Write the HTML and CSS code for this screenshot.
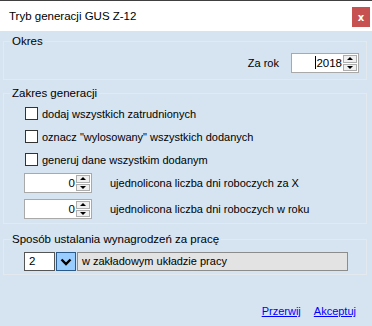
FILE: index.html
```html
<!DOCTYPE html>
<html lang="pl">
<head>
<meta charset="utf-8">
<title>Tryb generacji GUS Z-12</title>
<link rel="stylesheet" href="styles.css">
</head>
<body>
<div class="window">
  <div class="titlebar">
    <span class="title">Tryb generacji GUS Z-12</span>
    <span class="close">x</span>
  </div>
  <div class="content">
    <fieldset class="group okres">
      <legend>Okres</legend>
      <div class="inner year-row">
        <span class="label">Za rok</span>
        <div class="spin year">
          <span class="val"><span class="caret"></span>2018</span>
          <div class="arrows"><span class="btn up"></span><span class="btn down"></span></div>
        </div>
      </div>
    </fieldset>

    <fieldset class="group zakres">
      <legend>Zakres generacji</legend>
      <div class="inner">
        <div class="check-row"><span class="box"></span><span>dodaj wszystkich zatrudnionych</span></div>
        <div class="check-row"><span class="box"></span><span>oznacz "wylosowany" wszystkich dodanych</span></div>
        <div class="check-row"><span class="box"></span><span>generuj dane wszystkim dodanym</span></div>
        <div class="spin-row first">
          <div class="spin num">
            <span class="val">0</span>
            <div class="arrows"><span class="btn up"></span><span class="btn down"></span></div>
          </div>
          <span>ujednolicona liczba dni roboczych za X</span>
        </div>
        <div class="spin-row">
          <div class="spin num">
            <span class="val">0</span>
            <div class="arrows"><span class="btn up"></span><span class="btn down"></span></div>
          </div>
          <span>ujednolicona liczba dni roboczych w roku</span>
        </div>
      </div>
    </fieldset>

    <fieldset class="group sposob">
      <legend>Sposób ustalania wynagrodzeń za pracę</legend>
      <div class="inner combo">
        <span class="code">2</span>
        <span class="drop"><svg width="12" height="8" viewBox="0 0 12 8"><path d="M1.5 1.5 L6 6 L10.5 1.5" fill="none" stroke="#000" stroke-width="2.4"/></svg></span>
        <span class="desc">w zakładowym układzie pracy</span>
      </div>
    </fieldset>

    <div class="footer">
      <a class="link" href="#">Przerwij</a>
      <a class="link" href="#">Akceptuj</a>
    </div>
  </div>
</div>
</body>
</html>
```
FILE: styles.css
```css
* { box-sizing: border-box; }
html, body { margin: 0; padding: 0; }
body {
  width: 372px;
  height: 326px;
  overflow: hidden;
  font-family: "Liberation Sans", Arial, sans-serif;
  font-size: 11px;
  color: #000;
  background: #d6e4f1;
}
.window {
  height: 326px;
  border-top: 1px solid #404040;
  display: flex;
  flex-direction: column;
}
.titlebar {
  height: 30px;
  background: #fff;
  display: flex;
  align-items: center;
  justify-content: space-between;
  padding: 0 2px 0 9px;
}
.title { font-size: 11.5px; }
.close {
  width: 18px;
  height: 20px;
  margin-top: 2px;
  background: #c75050;
  color: #fff;
  font-family: "DejaVu Sans", sans-serif;
  font-weight: bold;
  font-size: 10px;
  display: flex;
  align-items: center;
  justify-content: center;
}
.content {
  flex: 1;
  display: flex;
  flex-direction: column;
  padding: 3px 5px 0 3px;
}
.group {
  margin: 0;
  padding: 0;
  border: 1px solid #e4e9ee;
  min-width: 0;
}
.group legend {
  padding: 0 2px;
  margin-left: 6px;
  line-height: 14px;
  font-size: 11.5px;
}
.okres .inner { padding: 5px 7px 6px 0; }
.year-row {
  display: flex;
  justify-content: flex-end;
  align-items: center;
  gap: 12px;
}
.spin {
  height: 20px;
  background: #fff;
  border: 1px solid #a9a9a9;
  display: flex;
  align-items: center;
}
.spin .val {
  flex: 1;
  text-align: right;
  padding-right: 1px;
  line-height: 18px;
  font-size: 11.5px;
}
.caret {
  display: inline-block;
  width: 1px;
  height: 13px;
  background: #000;
  vertical-align: -2px;
}
.year { width: 68px; }
.num { width: 68px; }
.arrows {
  width: 15px;
  height: 18px;
  display: flex;
  flex-direction: column;
  justify-content: center;
  gap: 1px;
  padding: 1px 1px 1px 0;
}
.btn {
  flex: 1;
  background: #f0f0f0;
  border: 1px solid #adadad;
  display: flex;
  align-items: center;
  justify-content: center;
}
.btn::after {
  content: "";
  width: 0;
  height: 0;
  border-left: 3px solid transparent;
  border-right: 3px solid transparent;
}
.up::after { border-bottom: 3px solid #000; }
.down::after { border-top: 3px solid #000; }

.zakres { margin-top: 6px; }
.zakres .inner { padding: 2px 0 4px 21px; }
.check-row {
  height: 23px;
  display: flex;
  align-items: center;
  gap: 4px;
}
.box {
  width: 13px;
  height: 13px;
  background: #fff;
  border: 1px solid #333;
}
.spin-row {
  display: flex;
  align-items: center;
  gap: 18px;
  margin-left: -1px;
  margin-top: 6px;
}
.spin-row.first { margin-top: 2px; }

.sposob { margin-top: 8px; }
.combo {
  display: flex;
  height: 28px;
  gap: 1px;
  padding: 6px 0 3px 20px;
}
.code {
  width: 31px;
  background: #fff;
  border: 1px solid #555;
  padding-left: 4px;
  line-height: 17px;
  font-size: 11.5px;
}
.drop {
  width: 20px;
  background: #99ccff;
  border: 1px solid #2a5a8a;
  display: flex;
  align-items: center;
  justify-content: center;
}
.desc {
  width: 271px;
  background: #e3e3e3;
  border: 1px solid #8c8c8c;
  padding-left: 4px;
  line-height: 17px;
}
.footer {
  margin-top: auto;
  display: flex;
  justify-content: flex-end;
  gap: 13px;
  padding: 0 11px 9px 0;
}
.link {
  color: #0000ff;
  text-decoration: underline;
}
```
